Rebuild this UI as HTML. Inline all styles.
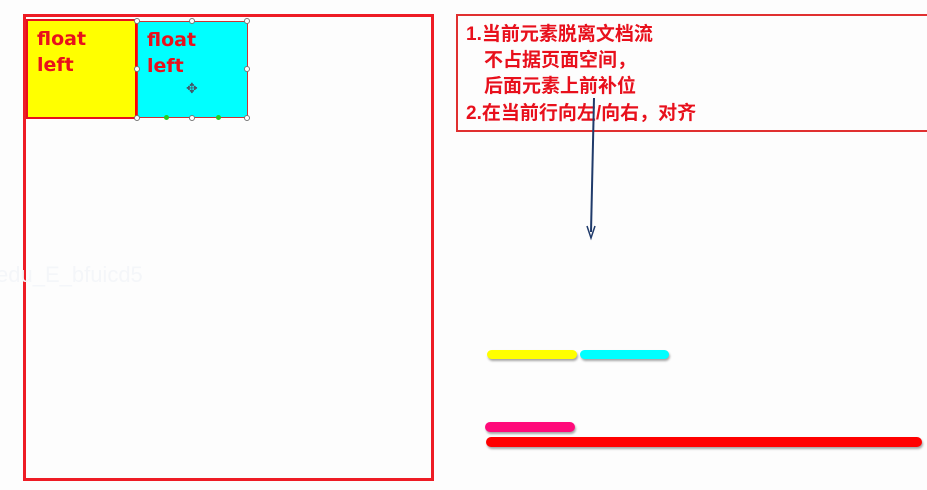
<!DOCTYPE html>
<html><head><meta charset="utf-8"><style>
html,body{margin:0;padding:0}
body{width:927px;height:490px;background:#fdfdfd;position:relative;overflow:hidden;font-family:"Liberation Sans","Noto Sans CJK SC",sans-serif}
.a{position:absolute;box-sizing:border-box}
.ft{font-family:"DejaVu Sans","Liberation Sans",sans-serif;font-weight:bold;color:#e8101c;font-size:19px;line-height:26px;padding:5px 0 0 9px}
.h{position:absolute;width:6px;height:6px;border:1px solid #777;border-radius:50%;background:#fff;box-sizing:border-box}
.t{position:absolute;left:466px;font-weight:bold;color:#e8101c;font-size:19px;white-space:nowrap}
.bar{position:absolute;height:9px;border-radius:5px;box-shadow:1px 2px 2px rgba(0,0,0,.35)}
</style></head><body>
<div class="a" style="left:23px;top:14px;width:411px;height:467px;border:3px solid #ee1c25"></div>
<div class="a ft" style="left:26px;top:19px;width:112px;height:100px;background:#ffff00;border:2px solid #e8101c;border-right:3px solid #f00">float<br>left</div>
<div class="a ft" style="left:137px;top:21px;width:111px;height:97px;background:#00ffff;border:1px solid #c33">float<br>left</div>
<div class="h" style="left:134px;top:18px"></div><div class="h" style="left:189px;top:18px"></div><div class="h" style="left:244px;top:18px"></div>
<div class="h" style="left:134px;top:66px"></div><div class="h" style="left:244px;top:66px"></div>
<div class="h" style="left:134px;top:115px"></div><div class="h" style="left:189px;top:115px"></div><div class="h" style="left:244px;top:115px"></div>
<div class="a" style="left:164px;top:115px;width:5px;height:5px;border-radius:50%;background:#2c2"></div>
<div class="a" style="left:216px;top:115px;width:5px;height:5px;border-radius:50%;background:#2c2"></div>
<div class="a" style="left:186px;top:80px;color:#456;font-size:14px">✥</div>
<div class="a" style="left:-4px;top:262px;color:#f4f6f9;font-size:22px">edu_E_bfuicd5</div>
<div class="a" style="left:456px;top:14px;width:475px;height:118px;border:2px solid #e03030"></div>
<div class="t" style="top:19px">1.当前元素脱离文档流</div>
<div class="t" style="top:45px;left:484px">不占据页面空间，</div>
<div class="t" style="top:71px;left:484px">后面元素上前补位</div>
<div class="t" style="top:98px">2.在当前行向左/向右，对齐</div>
<svg class="a" style="left:0;top:0" width="927" height="490"><line x1="594" y1="98" x2="591" y2="232" stroke="#1f3a6a" stroke-width="2"/><path d="M587 226 L591 238 L595 226" fill="none" stroke="#1f3a6a" stroke-width="1.5"/></svg>
<div class="bar" style="left:487px;top:350px;width:90px;background:#ffff00"></div>
<div class="bar" style="left:580px;top:350px;width:89px;background:#00ffff"></div>
<div class="bar" style="left:485px;top:422px;width:90px;height:10px;background:#ff0a7a"></div>
<div class="bar" style="left:486px;top:437px;width:436px;height:10px;background:#ff0000"></div>
</body></html>
